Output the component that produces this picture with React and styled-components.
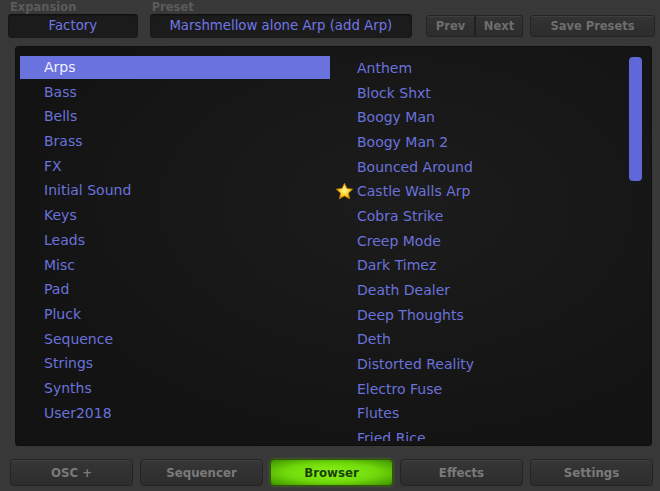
import React from 'react'
import styled, { createGlobalStyle } from 'styled-components'

const GlobalStyle = createGlobalStyle`
  html, body {
    margin: 0;
    padding: 0;
    background: #383838;
    font-family: "DejaVu Sans", Verdana, sans-serif;
  }
`

const categories = ['Arps', 'Bass', 'Bells', 'Brass', 'FX', 'Initial Sound', 'Keys', 'Leads', 'Misc', 'Pad', 'Pluck', 'Sequence', 'Strings', 'Synths', 'User2018']
const presets = ['Anthem', 'Block Shxt', 'Boogy Man', 'Boogy Man 2', 'Bounced Around', 'Castle Walls Arp', 'Cobra Strike', 'Creep Mode', 'Dark Timez', 'Death Dealer', 'Deep Thoughts', 'Deth', 'Distorted Reality', 'Electro Fuse', 'Flutes', 'Fried Rice']
const tabs = ['OSC +', 'Sequencer', 'Browser', 'Effects', 'Settings']

const Star = () => (
  <svg width="19" height="19" viewBox="0 0 24 24">
    <defs>
      <radialGradient id="sg" cx="50%" cy="45%" r="55%">
        <stop offset="0%" stopColor="#fff6a0" />
        <stop offset="60%" stopColor="#f7d21c" />
        <stop offset="100%" stopColor="#e09a08" />
      </radialGradient>
    </defs>
    <path d="M12 1.5l3.1 6.6 7.2.9-5.3 5 1.4 7.2L12 17.6l-6.4 3.6L7 14l-5.3-5 7.2-.9z" fill="url(#sg)" stroke="#c27a06" strokeWidth="1" strokeLinejoin="round" />
  </svg>
)

const App = () => {
  return <Page>
    <GlobalStyle />
    <Header>
      <Field $w={130}>
        <Label>Expansion</Label>
        <Display>Factory</Display>
      </Field>
      <Field $w={263}>
        <Label>Preset</Label>
        <Display>Marshmellow alone Arp (add Arp)</Display>
      </Field>
      <Actions>
        <Split>
          <SmallButton>Prev</SmallButton>
          <SmallButton>Next</SmallButton>
        </Split>
        <SaveButton>Save Presets</SaveButton>
      </Actions>
    </Header>
    <Panel>
      <List>
        {categories.map((c, i) => <CatRow key={c} $active={i === 0}>{c}</CatRow>)}
      </List>
      <List>
        {presets.map((p) => <PresetRow key={p}>
          <StarSlot>{p === 'Castle Walls Arp' ? <Star /> : null}</StarSlot>
          {p}
        </PresetRow>)}
      </List>
      <ScrollTrack>
        <Thumb />
      </ScrollTrack>
    </Panel>
    <Tabs>
      {tabs.map((t) => <Tab key={t} $active={t === 'Browser'}>{t}</Tab>)}
    </Tabs>
  </Page>
}

const Page = styled.div`
  width: 660px;
  height: 491px;
  overflow: hidden;
  display: flex;
  flex-direction: column;
`

const Header = styled.div`
  display: flex;
  align-items: flex-end;
  padding: 0 5px 0 8px;
  gap: 12px;
  height: 38px;
`

const Field = styled.div`
  display: flex;
  flex-direction: column;
  width: ${(p) => p.$w}px;
`

const Label = styled.div`
  font-size: 11.5px;
  font-weight: bold;
  color: #5b5b5b;
  line-height: 12px;
  height: 13px;
  margin-top: -2px;
  padding-left: 2px;
`

const Display = styled.div`
  height: 24px;
  line-height: 24px;
  background: #1b1b1b;
  border-radius: 4px;
  box-shadow: inset 0 1px 2px rgba(0, 0, 0, 0.6);
  color: #7077e4;
  font-size: 13.3px;
  text-align: center;
  white-space: nowrap;
`

const Actions = styled.div`
  display: flex;
  gap: 7px;
  margin-left: 2px;
  margin-bottom: 1px;
`

const Split = styled.div`
  display: flex;
`

const buttonBase = `
  height: 22px;
  box-sizing: border-box;
  border: 1px solid #242424;
  background: linear-gradient(#343434, #2c2c2c);
  color: #6e6e6e;
  font-family: "DejaVu Sans", Verdana, sans-serif;
  font-size: 11.5px;
  font-weight: bold;
  padding: 0;
  box-shadow: inset 0 1px 0 rgba(255, 255, 255, 0.06);
`

const SmallButton = styled.button`
  ${buttonBase}
  width: 48px;
  &:first-child {
    border-radius: 3px 0 0 3px;
    width: 49px;
  }
  &:last-child {
    border-radius: 0 3px 3px 0;
    border-left: 1px solid #1e1e1e;
  }
`

const SaveButton = styled.button`
  ${buttonBase}
  width: 125px;
  border-radius: 3px;
`

const Panel = styled.div`
  margin: 8px 8px 0 15px;
  height: 400px;
  box-sizing: border-box;
  background: radial-gradient(ellipse at 60% 40%, #1c1c1c, #131313 75%);
  border: 1px solid #0e0e0e;
  border-radius: 3px;
  display: grid;
  grid-template-columns: 310px 1fr 13px;
  padding: 9px 9px 4px 4px;
  overflow: hidden;
`

const List = styled.div`
  display: flex;
  flex-direction: column;
  overflow: hidden;
`

const CatRow = styled.div`
  height: 24.7px;
  line-height: 23px;
  flex-shrink: 0;
  font-size: 14px;
  padding-left: 24px;
  color: ${(p) => (p.$active ? '#f0f0ff' : '#6a72dc')};
  background: ${(p) => (p.$active ? '#6a72de' : 'transparent')};
  ${(p) => p.$active && 'height: 23px; margin-bottom: 1.7px;'}
`

const PresetRow = styled.div`
  height: 24.7px;
  line-height: 23px;
  flex-shrink: 0;
  font-size: 14px;
  color: #6a72dc;
  display: flex;
  align-items: center;
  white-space: nowrap;
`

const StarSlot = styled.span`
  width: 27px;
  display: flex;
  justify-content: flex-end;
  padding-right: 3px;
  box-sizing: border-box;
`

const ScrollTrack = styled.div`
  display: flex;
  flex-direction: column;
  padding-top: 1px;
`

const Thumb = styled.div`
  height: 124px;
  border-radius: 4px;
  background: #5f67d9;
`

const Tabs = styled.div`
  display: flex;
  gap: 7px;
  padding: 13px 5px 0 10px;
`

const Tab = styled.div`
  width: 123px;
  height: 27px;
  box-sizing: border-box;
  border-radius: 4px;
  border: 1px solid ${(p) => (p.$active ? '#2c5a00' : '#242424')};
  background: ${(p) => (p.$active
    ? 'radial-gradient(ellipse at 50% 50%, #8cf51a 0%, #6fd80a 55%, #3f8e00 100%)'
    : 'linear-gradient(#363636, #2d2d2d)')};
  box-shadow: ${(p) => (p.$active ? '0 0 3px rgba(110, 220, 10, 0.4)' : 'inset 0 1px 0 rgba(255,255,255,0.06)')};
  color: ${(p) => (p.$active ? '#17420a' : '#7a7a7a')};
  font-size: 11.8px;
  font-weight: bold;
  display: flex;
  align-items: center;
  justify-content: center;
`

export default App
